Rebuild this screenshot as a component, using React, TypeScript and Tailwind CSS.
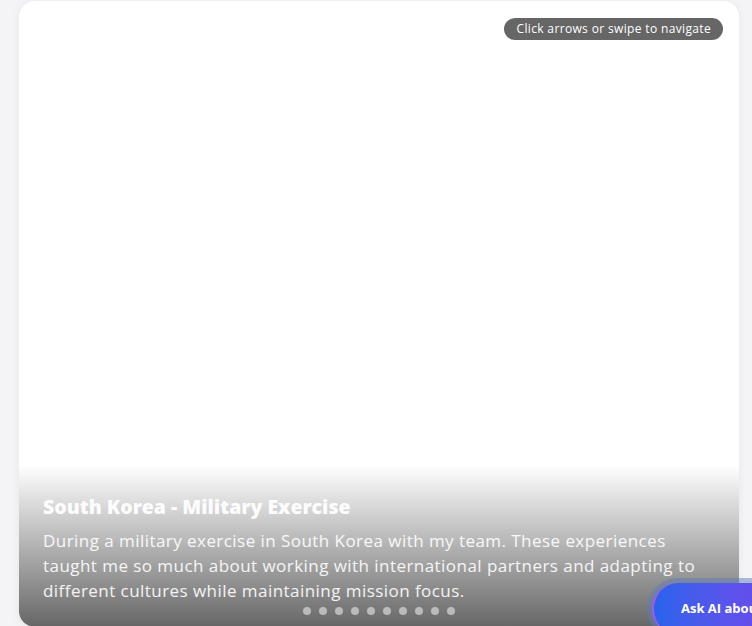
const slides = Array.from({ length: 10 }, (_, i) => i);

export default function App() {
  return (
    <div
      className="relative h-[626px] w-[752px] overflow-hidden bg-[#f4f4f6] pl-[19px] pt-px"
      style={{ fontFamily: '"Open Sans", "Liberation Sans", sans-serif' }}
    >
      <div className="relative h-[626px] w-[720px] overflow-hidden rounded-2xl bg-white shadow-[0_2px_10px_rgba(0,0,0,0.06)]">
        <div className="absolute right-4 top-[17px] rounded-full bg-black/60 px-3 py-[3px] text-[12px] leading-4 tracking-[0.35px] text-white">
          Click arrows or swipe to navigate
        </div>

        <div className="absolute inset-x-0 bottom-0 bg-gradient-to-t from-black/60 to-transparent px-6 pb-6 pt-[26px]">
          <h3 className="text-[19.5px] font-extrabold leading-8 text-white/95">South Korea - Military Exercise</h3>
          <p className="mt-[5px] max-w-[662px] text-[17px] leading-[25px] tracking-[0.45px] text-white/90">
            During a military exercise in South Korea with my team. These experiences taught me so much about working
            with international partners and adapting to different cultures while maintaining mission focus.
          </p>
        </div>

        <div className="absolute bottom-3 left-0 right-0 flex justify-center gap-2">
          {slides.map((i) => (
            <span key={i} className="h-2 w-2 rounded-full bg-white/50" />
          ))}
        </div>
      </div>

      <div className="absolute left-[647px] top-[578px] rounded-full bg-[#5b7bb5]/50 p-[5px]">
        <button className="flex h-[52px] items-center whitespace-nowrap rounded-full border-l-2 border-[#a855f7] bg-gradient-to-r from-[#2563eb] to-[#7c3aed] pl-[27px] pr-6 text-[13px] font-bold text-white">
          Ask AI about this
        </button>
      </div>
    </div>
  );
}
